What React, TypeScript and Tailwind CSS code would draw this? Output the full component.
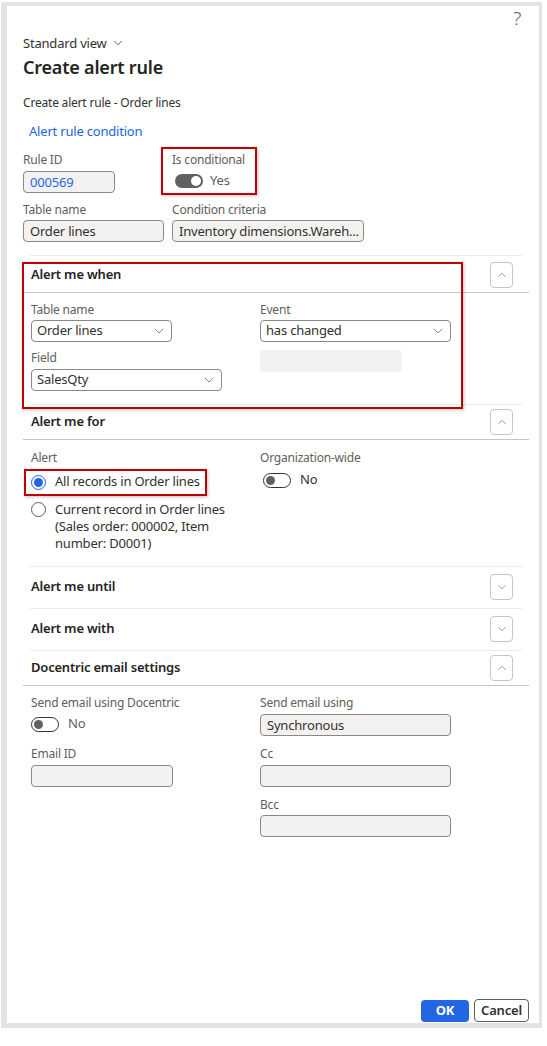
import { ChevronDown, ChevronUp } from "lucide-react";

function Label({ children }: { children: React.ReactNode }) {
  return <div className="text-[12px] leading-[16px] text-[#605e5c]">{children}</div>;
}

function Input({ w, value, blue }: { w: string; value?: string; blue?: boolean }) {
  return (
    <div
      className={`${w} h-[22px] rounded-[4px] border border-[#8a8886] bg-[#f3f2f1] px-[6px] text-[13px] leading-[20px] whitespace-nowrap overflow-hidden ${
        blue ? "text-[#2266e3]" : "text-[#323130]"
      }`}
    >
      {value}
    </div>
  );
}

function Select({ w, value }: { w: string; value: string }) {
  return (
    <div
      className={`${w} h-[22px] rounded-[4px] border border-[#8a8886] bg-white pl-[5px] pr-[4px] flex items-center justify-between text-[13px] text-[#323130]`}
    >
      <span>{value}</span>
      <ChevronDown size={16} strokeWidth={1.1} className="text-[#605e5c]" />
    </div>
  );
}

function Toggle({ on }: { on?: boolean }) {
  if (on) {
    return (
      <div className="w-[28px] h-[14px] rounded-full bg-[#616161] flex items-center justify-end pr-[2px]">
        <div className="w-[10px] h-[10px] rounded-full bg-white" />
      </div>
    );
  }
  return (
    <div className="w-[28px] h-[15px] rounded-full border border-[#323130] bg-white flex items-center pl-[2px]">
      <div className="w-[9px] h-[9px] rounded-full bg-[#616161]" />
    </div>
  );
}

function CollapseButton({ up }: { up?: boolean }) {
  return (
    <div className="w-[23px] h-[26px] rounded-[4px] border border-[#c8c6c4] bg-white flex items-center justify-center text-[#605e5c]">
      {up ? <ChevronUp size={14} strokeWidth={1} /> : <ChevronDown size={14} strokeWidth={1} />}
    </div>
  );
}

function SectionHeader({ title, up }: { title: string; up?: boolean }) {
  return (
    <div
      className={`flex items-center justify-between pl-[8px] pr-[16px] ${
        up ? "pb-[4px] border-b border-[#c8c6c4]" : ""
      }`}
    >
      <div className="text-[13px] font-semibold text-[#252423]">{title}</div>
      <CollapseButton up={up} />
    </div>
  );
}

function Separator() {
  return <div className="h-px bg-[#ebebeb] mx-[7px]" />;
}

export default function App() {
  return (
    <div className="w-[547px] h-[1046px] bg-white pt-[2px] pl-[1px] font-['Segoe_UI','Noto_Sans',sans-serif] tracking-[-0.2px] text-[#323130]">
      <div className="w-[541px] h-[1026px] border-t-[4px] border-l-[6px] border-r-[3px] border-b-[5px] border-[#e3e3e3] flex flex-col pl-[16px] pr-[10px]">
        <div className="h-[29px] flex justify-end pr-[8px] text-[19px] leading-[24px] text-[#605e5c] font-light">?</div>
        <div className="flex items-center gap-[4px] text-[13px] leading-[16px] text-[#323130]">
          Standard view
          <ChevronDown size={14} strokeWidth={1.3} />
        </div>
        <div className="mt-[4px] text-[18px] leading-[24px] font-semibold text-[#252423]">Create alert rule</div>
        <div className="mt-[16px] text-[12px] leading-[16px]">Create alert rule - Order lines</div>
        <div className="mt-[11px] pl-[6px] text-[13px] leading-[18px] text-[#2266e3]">Alert rule condition</div>

        <div className="mt-[7px] grid grid-cols-[149px_1fr]">
          <div className="pt-[5px]">
            <Label>Rule ID</Label>
            <div className="mt-[3px]">
              <Input w="w-[92px]" value="000569" blue />
            </div>
          </div>
          <div className="-ml-[11px] w-[96px] h-[48px] border-2 border-[#c00000] pl-[9px] pt-[3px] shadow-[1px_1px_3px_rgba(0,0,0,0.25)]">
            <Label>Is conditional</Label>
            <div className="mt-[3px] ml-[3px] h-[20px] flex items-center gap-[7px]">
              <Toggle on />
              <span className="text-[13px] text-[#605e5c]">Yes</span>
            </div>
          </div>
        </div>

        <div className="mt-[7px] grid grid-cols-[149px_1fr]">
          <div>
            <Label>Table name</Label>
            <div className="mt-[2px]">
              <Input w="w-[141px]" value="Order lines" />
            </div>
          </div>
          <div>
            <Label>Condition criteria</Label>
            <div className="mt-[2px]">
              <Input w="w-[192px]" value="Inventory dimensions.Wareh..." />
            </div>
          </div>
        </div>

        <div className="mt-[13px]">
          <Separator />
        </div>

        {/* Alert me when */}
        <div className="relative mt-[6px]">
          <SectionHeader title="Alert me when" up />
          <div className="pl-[8px] pt-[9px] pb-[13px] grid grid-cols-[229px_1fr] gap-y-[8px] items-start">
            <div>
              <Label>Table name</Label>
              <div className="mt-[2px]">
                <Select w="w-[141px]" value="Order lines" />
              </div>
            </div>
            <div>
              <Label>Event</Label>
              <div className="mt-[2px]">
                <Select w="w-[191px]" value="has changed" />
              </div>
            </div>
            <div>
              <Label>Field</Label>
              <div className="mt-[3px]">
                <Select w="w-[191px]" value="SalesQty" />
              </div>
            </div>
            <div className="w-[142px] h-[22px] rounded-[4px] bg-[#f3f2f1]" />
          </div>
          <div className="pointer-events-none absolute -left-[1px] top-0 w-[441px] h-[147px] border-2 border-[#c00000] shadow-[1px_1px_3px_rgba(0,0,0,0.25)]" />
        </div>

        <Separator />

        {/* Alert me for */}
        <div className="mt-[4px]">
          <SectionHeader title="Alert me for" up />
          <div className="pl-[8px] pt-[10px] pb-[14px] grid grid-cols-[229px_1fr]">
            <div>
              <Label>Alert</Label>
              <div className="relative mt-[5px] h-[22px] flex items-center">
                <div className="w-[15px] h-[15px] rounded-full border border-[#2266e3] flex items-center justify-center">
                  <div className="w-[9px] h-[9px] rounded-full bg-[#2266e3]" />
                </div>
                <span className="ml-[9px] text-[13px]">All records in Order lines</span>
                <div className="pointer-events-none absolute -left-[7px] -top-[2px] w-[183px] h-[27px] border-2 border-[#c00000] shadow-[1px_1px_3px_rgba(0,0,0,0.25)]" />
              </div>
              <div className="mt-[8px] flex items-start">
                <div className="mt-[1px] w-[15px] h-[15px] rounded-full border border-[#605e5c] shrink-0" />
                <div className="ml-[9px] text-[13px] leading-[17px]">
                  Current record in Order lines
                  <br />
                  (Sales order: 000002, Item
                  <br />
                  number: D0001)
                </div>
              </div>
            </div>
            <div>
              <Label>Organization-wide</Label>
              <div className="mt-[6px] ml-[3px] h-[16px] flex items-center gap-[9px]">
                <Toggle />
                <span className="text-[13px]">No</span>
              </div>
            </div>
          </div>
        </div>

        <Separator />
        <div className="pt-[7px] pb-[8px]">
          <SectionHeader title="Alert me until" />
        </div>
        <Separator />
        <div className="pt-[7px] pb-[8px]">
          <SectionHeader title="Alert me with" />
        </div>
        <Separator />

        {/* Docentric email settings */}
        <div className="pt-[4px]">
          <SectionHeader title="Docentric email settings" up />
          <div className="pl-[8px] pt-[9px] grid grid-cols-[229px_1fr] gap-y-[10px] items-start">
            <div>
              <Label>Send email using Docentric</Label>
              <div className="mt-[5px] h-[16px] flex items-center gap-[9px]">
                <Toggle />
                <span className="text-[13px] text-[#605e5c]">No</span>
              </div>
            </div>
            <div>
              <Label>Send email using</Label>
              <div className="mt-[3px]">
                <Input w="w-[191px]" value="Synchronous" />
              </div>
            </div>
            <div>
              <Label>Email ID</Label>
              <div className="mt-[3px]">
                <Input w="w-[142px]" />
              </div>
            </div>
            <div>
              <Label>Cc</Label>
              <div className="mt-[3px]">
                <Input w="w-[191px]" />
              </div>
            </div>
            <div />
            <div>
              <Label>Bcc</Label>
              <div className="mt-[2px]">
                <Input w="w-[191px]" />
              </div>
            </div>
          </div>
        </div>

        <div className="flex-1" />
        <div className="flex justify-end items-end gap-[5px] pb-[1px]">
          <button className="w-[48px] h-[22px] rounded-[4px] bg-[#2266e3] text-white text-[13px] font-bold">OK</button>
          <button className="w-[55px] h-[23px] rounded-[4px] border border-[#605e5c] bg-white text-[13px] font-semibold text-[#323130]">
            Cancel
          </button>
        </div>
      </div>
    </div>
  );
}
